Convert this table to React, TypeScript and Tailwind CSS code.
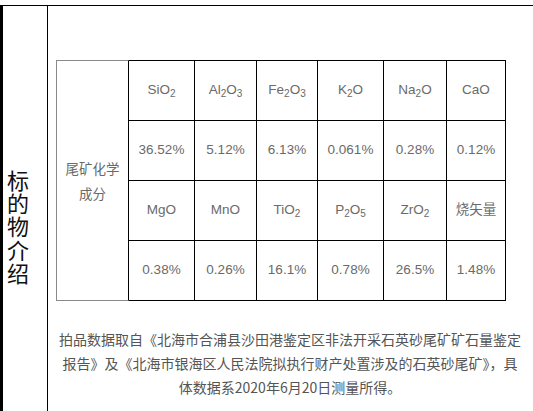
import React from "react";

const Chem = ({ parts }: { parts: (string | [string])[] }) => (
  <span>
    {parts.map((p, i) =>
      typeof p === "string" ? (
        <span key={i}>{p}</span>
      ) : (
        <sub key={i} className="text-[10px]">{p[0]}</sub>
      )
    )}
  </span>
);

const row1: React.ReactNode[] = [
  <Chem parts={["SiO", ["2"]]} />,
  <Chem parts={["Al", ["2"], "O", ["3"]]} />,
  <Chem parts={["Fe", ["2"], "O", ["3"]]} />,
  <Chem parts={["K", ["2"], "O"]} />,
  <Chem parts={["Na", ["2"], "O"]} />,
  <span>CaO</span>,
];
const row2 = ["36.52%", "5.12%", "6.13%", "0.061%", "0.28%", "0.12%"];
const row3: React.ReactNode[] = [
  <span>MgO</span>,
  <span>MnO</span>,
  <Chem parts={["TiO", ["2"]]} />,
  <Chem parts={["P", ["2"], "O", ["5"]]} />,
  <Chem parts={["ZrO", ["2"]]} />,
  <span>烧矢量</span>,
];
const row4 = ["0.38%", "0.26%", "16.1%", "0.78%", "26.5%", "1.48%"];

export default function App() {
  const font = { fontFamily: '"Liberation Sans", "Noto Sans CJK SC", sans-serif' };
  const cjk = { fontFamily: '"Noto Sans CJK SC", "Liberation Sans", sans-serif' };
  return (
    <div className="w-[533px] h-[411px] overflow-hidden bg-white">
      <div className="w-[560px] pt-[5px]">
        <div className="flex border-t border-l-[3px] border-black min-h-[420px]">
          <div className="w-[45px] shrink-0 border-r border-black pt-[162px] pl-[4px]">
            <div
              className="w-[24px] text-[22px] leading-[23.2px] text-[#111]"
              style={cjk}
            >
              标的物介绍
            </div>
          </div>
          <div className="flex-1 pl-[8px] pt-[54px]" style={font}>
            <div className="grid grid-cols-[73px_66px_62px_61px_66px_63px_59px] grid-rows-[61px_60px_60px_60px] text-[13.5px] text-[#6a6a6a]">
              <div className="row-span-4 flex flex-col items-center justify-center border border-[#8a8a8a] border-r-black leading-[25px]" style={cjk}>
                <div>尾矿化学</div>
                <div>成分</div>
              </div>
              {row1.map((c, i) => (
                <div key={"a" + i} className="flex items-center justify-center border-t border-r border-b border-black">
                  {c}
                </div>
              ))}
              {row2.map((c, i) => (
                <div key={"b" + i} className="flex items-center justify-center border-r border-b border-black">
                  {c}
                </div>
              ))}
              {row3.map((c, i) => (
                <div key={"c" + i} className="flex items-center justify-center border-r border-b border-black">
                  {c}
                </div>
              ))}
              {row4.map((c, i) => (
                <div key={"d" + i} className="flex items-center justify-center border-r border-b border-black">
                  {c}
                </div>
              ))}
            </div>
            <div className="w-[468px] mt-[26px] text-center text-[14px] leading-[24px] text-[#555]" style={cjk}>
              <div className="whitespace-nowrap">拍品数据取自《北海市合浦县沙田港鉴定区非法开采石英砂尾矿矿石量鉴定</div>
              <div className="whitespace-nowrap">报告》及《北海市银海区人民法院拟执行财产处置涉及的石英砂尾矿》，具</div>
              <div className="whitespace-nowrap">体数据系2020年6月20日测量所得。</div>
            </div>
          </div>
        </div>
      </div>
    </div>
  );
}
